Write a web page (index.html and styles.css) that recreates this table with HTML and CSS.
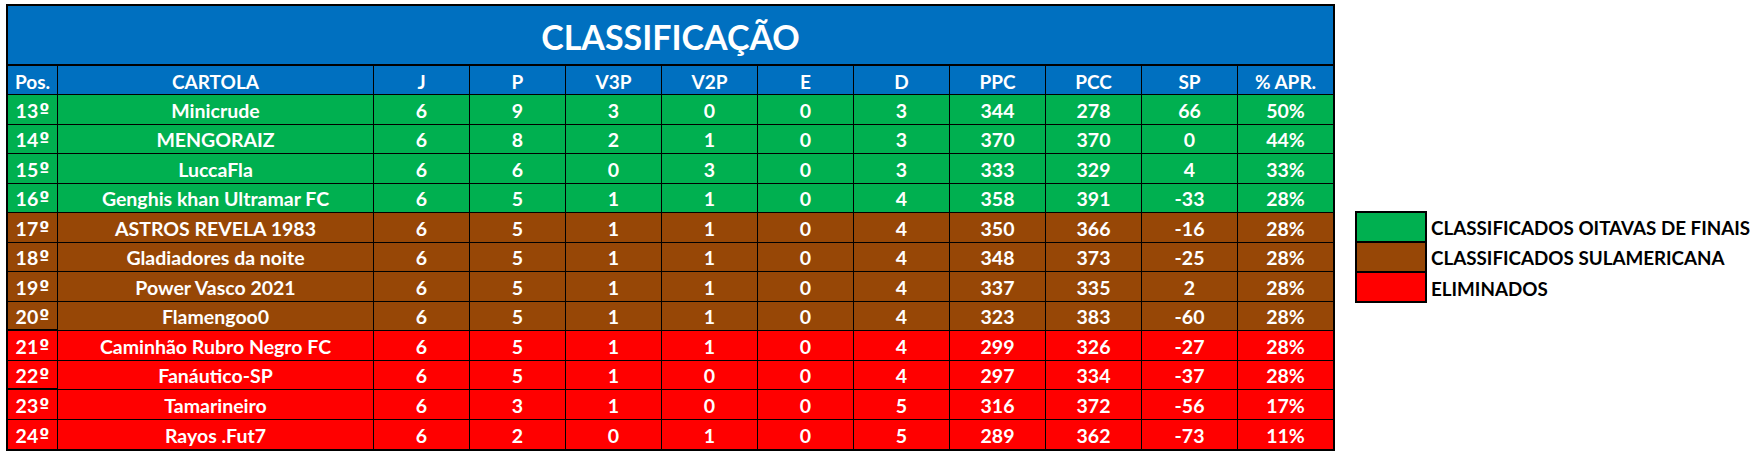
FILE: index.html
```html
<!DOCTYPE html>
<html lang="pt-BR">
<head>
<meta charset="utf-8">
<title>Classificação</title>
<link rel="stylesheet" href="styles.css">
</head>
<body>
<main class="page">
  <section class="board">
    <h1 class="title">CLASSIFICAÇÃO</h1>
    <div class="row head">
      <div class="c">Pos.</div><div class="c">CARTOLA</div><div class="c">J</div><div class="c">P</div><div class="c">V3P</div><div class="c">V2P</div><div class="c">E</div><div class="c">D</div><div class="c">PPC</div><div class="c">PCC</div><div class="c">SP</div><div class="c">% APR.</div>
    </div>
    <div class="row green"><div class="c">13<span class="ord">º</span></div><div class="c">Minicrude</div><div class="c">6</div><div class="c">9</div><div class="c">3</div><div class="c">0</div><div class="c">0</div><div class="c">3</div><div class="c">344</div><div class="c">278</div><div class="c">66</div><div class="c">50%</div></div>
    <div class="row green"><div class="c">14<span class="ord">º</span></div><div class="c">MENGORAIZ</div><div class="c">6</div><div class="c">8</div><div class="c">2</div><div class="c">1</div><div class="c">0</div><div class="c">3</div><div class="c">370</div><div class="c">370</div><div class="c">0</div><div class="c">44%</div></div>
    <div class="row green"><div class="c">15<span class="ord">º</span></div><div class="c">LuccaFla</div><div class="c">6</div><div class="c">6</div><div class="c">0</div><div class="c">3</div><div class="c">0</div><div class="c">3</div><div class="c">333</div><div class="c">329</div><div class="c">4</div><div class="c">33%</div></div>
    <div class="row green"><div class="c">16<span class="ord">º</span></div><div class="c">Genghis khan Ultramar FC</div><div class="c">6</div><div class="c">5</div><div class="c">1</div><div class="c">1</div><div class="c">0</div><div class="c">4</div><div class="c">358</div><div class="c">391</div><div class="c">-33</div><div class="c">28%</div></div>
    <div class="row brown"><div class="c">17<span class="ord">º</span></div><div class="c">ASTROS REVELA 1983</div><div class="c">6</div><div class="c">5</div><div class="c">1</div><div class="c">1</div><div class="c">0</div><div class="c">4</div><div class="c">350</div><div class="c">366</div><div class="c">-16</div><div class="c">28%</div></div>
    <div class="row brown"><div class="c">18<span class="ord">º</span></div><div class="c">Gladiadores da noite</div><div class="c">6</div><div class="c">5</div><div class="c">1</div><div class="c">1</div><div class="c">0</div><div class="c">4</div><div class="c">348</div><div class="c">373</div><div class="c">-25</div><div class="c">28%</div></div>
    <div class="row brown"><div class="c">19<span class="ord">º</span></div><div class="c">Power Vasco 2021</div><div class="c">6</div><div class="c">5</div><div class="c">1</div><div class="c">1</div><div class="c">0</div><div class="c">4</div><div class="c">337</div><div class="c">335</div><div class="c">2</div><div class="c">28%</div></div>
    <div class="row brown"><div class="c thick">20<span class="ord">º</span></div><div class="c">Flamengoo0</div><div class="c">6</div><div class="c">5</div><div class="c">1</div><div class="c">1</div><div class="c">0</div><div class="c">4</div><div class="c">323</div><div class="c">383</div><div class="c">-60</div><div class="c">28%</div></div>
    <div class="row red"><div class="c">21<span class="ord">º</span></div><div class="c">Caminhão Rubro Negro FC</div><div class="c">6</div><div class="c">5</div><div class="c">1</div><div class="c">1</div><div class="c">0</div><div class="c">4</div><div class="c">299</div><div class="c">326</div><div class="c">-27</div><div class="c">28%</div></div>
    <div class="row red"><div class="c thick">22<span class="ord">º</span></div><div class="c">Fanáutico-SP</div><div class="c">6</div><div class="c">5</div><div class="c">1</div><div class="c">0</div><div class="c">0</div><div class="c">4</div><div class="c">297</div><div class="c">334</div><div class="c">-37</div><div class="c">28%</div></div>
    <div class="row red"><div class="c">23<span class="ord">º</span></div><div class="c">Tamarineiro</div><div class="c">6</div><div class="c">3</div><div class="c">1</div><div class="c">0</div><div class="c">0</div><div class="c">5</div><div class="c">316</div><div class="c">372</div><div class="c">-56</div><div class="c">17%</div></div>
    <div class="row red last"><div class="c">24<span class="ord">º</span></div><div class="c">Rayos .Fut7</div><div class="c">6</div><div class="c">2</div><div class="c">0</div><div class="c">1</div><div class="c">0</div><div class="c">5</div><div class="c">289</div><div class="c">362</div><div class="c">-73</div><div class="c">11%</div></div>
  </section>
  <aside class="legend">
    <div class="legend-item"><span class="swatch green"></span><span class="label">CLASSIFICADOS OITAVAS DE FINAIS</span></div>
    <div class="legend-item"><span class="swatch brown"></span><span class="label">CLASSIFICADOS SULAMERICANA</span></div>
    <div class="legend-item"><span class="swatch red last"></span><span class="label">ELIMINADOS</span></div>
  </aside>
</main>
</body>
</html>
```
FILE: styles.css
```css
html, body {
  margin: 0;
  padding: 0;
  background: #ffffff;
}

body {
  font-family: Lato, "Liberation Sans", sans-serif;
  font-weight: 700;
}

.page {
  display: flex;
  align-items: flex-start;
  padding: 4px 0 0 6px;
}

.board {
  width: 1329px;
  box-sizing: border-box;
  border: 2px solid #000;
  color: #fff;
}

.title {
  margin: 0;
  height: 60px;
  box-sizing: border-box;
  border-bottom: 2px solid #000;
  background: #0070c0;
  font-size: 34px;
  font-weight: 700;
  display: flex;
  align-items: center;
  justify-content: center;
  padding-top: 2px;
}

.row {
  display: grid;
  grid-template-columns: 50px 316px repeat(9, 96px) 95px;
  height: 29.5px;
  font-size: 19.5px;
}

.row.head {
  height: 29px;
  font-size: 19px;
  background: #0070c0;
}

.green { background: #00b050; }
.brown { background: #974706; }
.red { background: #ff0000; }

.c {
  box-sizing: border-box;
  border-right: 1px solid #000;
  border-bottom: 1px solid #000;
  display: flex;
  align-items: center;
  justify-content: center;
  white-space: nowrap;
  padding-top: 2px;
}

.ord {
  font-family: "DejaVu Sans", sans-serif;
  font-size: 18px;
  margin-left: 1px;
}

.c:last-child {
  border-right: none;
}

.c.thick {
  border-bottom-width: 2px;
}

.row.last .c {
  border-bottom: none;
}

.legend {
  margin: 207px 0 0 20px;
  display: flex;
  flex-direction: column;
}

.legend-item {
  display: flex;
  align-items: center;
}

.swatch {
  display: block;
  width: 72px;
  height: 30px;
  box-sizing: border-box;
  border: 2px solid #000;
  border-bottom: none;
}

.swatch.last {
  height: 32px;
  border-bottom: 2px solid #000;
}

.label {
  margin-left: 4px;
  font-size: 18.8px;
  color: #000;
  white-space: nowrap;
  padding-top: 2px;
}
```
